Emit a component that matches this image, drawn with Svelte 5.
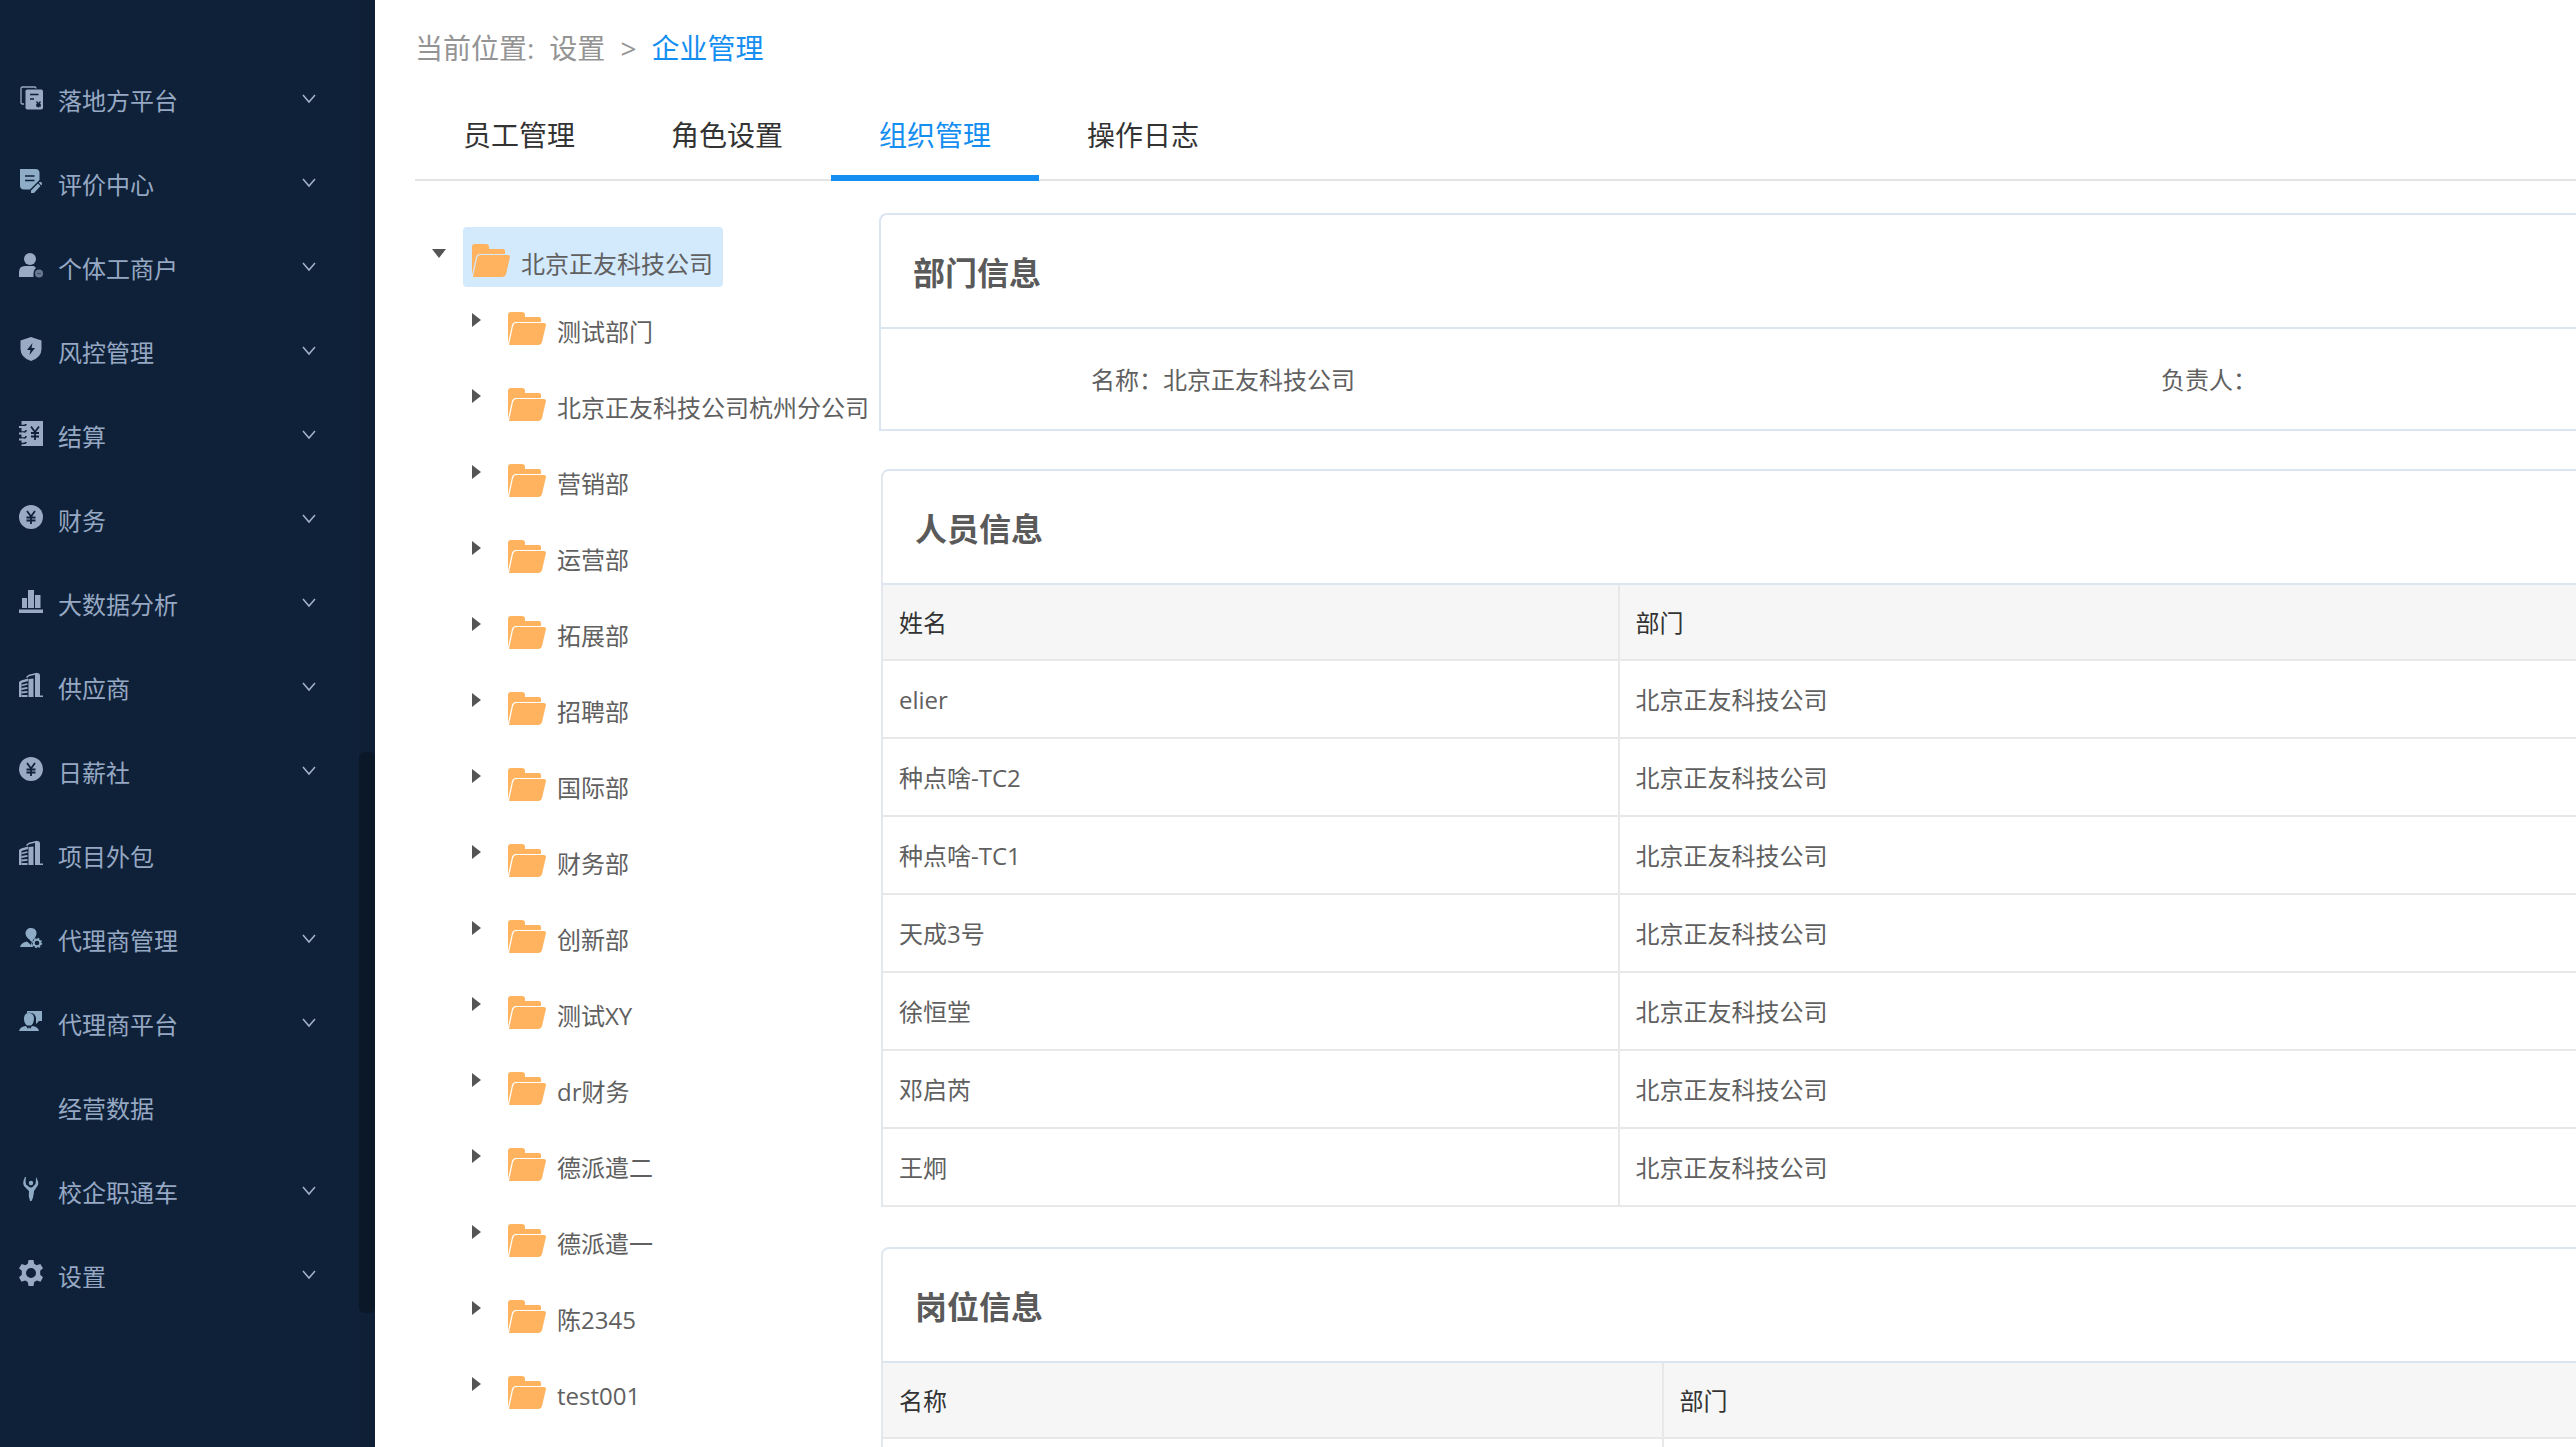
<script lang="ts">
    type MenuItem = { label: string; icon: string; arrow: boolean };

    const menu: MenuItem[] = [
        { label: '落地方平台', icon: 'bill', arrow: true },
        { label: '评价中心', icon: 'review', arrow: true },
        { label: '个体工商户', icon: 'person', arrow: true },
        { label: '风控管理', icon: 'shield', arrow: true },
        { label: '结算', icon: 'ledger', arrow: true },
        { label: '财务', icon: 'coin', arrow: true },
        { label: '大数据分析', icon: 'bars', arrow: true },
        { label: '供应商', icon: 'building', arrow: true },
        { label: '日薪社', icon: 'coin', arrow: true },
        { label: '项目外包', icon: 'building', arrow: false },
        { label: '代理商管理', icon: 'agent-gear', arrow: true },
        { label: '代理商平台', icon: 'agent-chat', arrow: true },
        { label: '经营数据', icon: '', arrow: false },
        { label: '校企职通车', icon: 'school', arrow: true },
        { label: '设置', icon: 'gear', arrow: true },
    ];

    const tabs = ['员工管理', '角色设置', '组织管理', '操作日志'];
    let activeTab = $state('组织管理');

    const company = '北京正友科技公司';
    const departments = [
        '测试部门',
        '北京正友科技公司杭州分公司',
        '营销部',
        '运营部',
        '拓展部',
        '招聘部',
        '国际部',
        '财务部',
        '创新部',
        '测试XY',
        'dr财务',
        '德派遣二',
        '德派遣一',
        '陈2345',
        'test001',
    ];
    let selected = $state(company);

    const people = ['elier', '种点啥-TC2', '种点啥-TC1', '天成3号', '徐恒堂', '邓启芮', '王炯'];
</script>

{#snippet folder()}
    <svg class="folder" viewBox="0 0 38 40" aria-hidden="true">
        <path d="M0 31V3Q0 0 3 0H14Q17 0 17 3V5H31Q33 5 33 7V10H8Q5 10 4 13Z" fill="#ffb35f" />
        <path d="M8 11H36Q38 11 38 13L34 30Q33 33 30 33H1L5 14Q6 11 8 11Z" fill="#ffb35f" />
    </svg>
{/snippet}

{#snippet menuIcon(name: string)}
    <svg class="menu-icon" class:cyan={['review', 'agent-gear', 'agent-chat', 'school'].includes(name)} viewBox="0 0 24 24" aria-hidden="true">
        {#if name === 'bill'}
            <path class="line" d="M5 19H3.5Q2 19 2 17.500V3.500Q2 2 3.500 2H15.500Q17 2 17 3.500" stroke-width="1.300" />
            <rect x="6.500" y="4.500" width="17.500" height="20" rx="1.800" />
            <path class="cut" d="M11 9.500H19.500M11 14H15M17.500 16.500L19.500 19L21.500 16.500M19.500 19V22.500M17.200 19.500H21.800M17.200 21H21.800" stroke-width="1.300" />
        {:else if name === 'review'}
            <path d="M1 0H16.500Q20.500 0 20.500 4V11L11 20.500H5Q1 20.500 1 16.500Z" />
            <path class="cut" d="M6 7H15.500M6 11.500H15.500" stroke-width="1.500" />
            <path d="M12 21.500L19 14.500L21.500 17L15 24H12ZM19.800 13.800L20.700 13Q21.500 12.500 22.500 13.500T23 15.500L22.200 16.300Z" />
        {:else if name === 'person'}
            <circle cx="11" cy="6" r="6" />
            <path d="M0 24V19Q0 13 6 13H15L17 15Q14 17 14.500 24Z" />
            <circle cx="20" cy="20.500" r="4" opacity="0.650" />
            <path class="cut" d="M18 20.500H22" stroke-width="1" opacity="0.500" />
        {:else if name === 'shield'}
            <path d="M12 0L22.500 3.500V12Q22.500 20.500 12 24Q1.500 20.500 1.500 12V3.500Z" />
            <path class="hole" d="M13.500 6L8 13H11.500L10.500 18L16 11H12.500Z" />
        {:else if name === 'ledger'}
            <path d="M2.500 0H24V25H2.500Z" />
            <path class="cut" d="M0 4.500H4Q7 4.500 7 3M0 11H5Q7 11 7 9M0 17H5Q7 17 7 15M0 22.500H4Q7 22.500 7 21" stroke-width="1.500" />
            <path class="line" d="M0 6H5M0 12.500H5M0 18.500H5" stroke-width="1.800" />
            <path class="cut" d="M12 5.500L16 11L20 5.500M16 11V19M12 12H20M12 15.500H20" stroke-width="1.800" />
        {:else if name === 'coin'}
            <circle cx="12" cy="12" r="12" />
            <path class="cut" d="M8 6L12 11.500L16 6M12 11.500V19M7.500 12.500H16.500M7.500 15.500H16.500" stroke-width="1.800" />
        {:else if name === 'bars'}
            <path d="M3 9H8V19H3ZM9 1H15V19H9ZM16 6H21.500V19H16ZM0 20.500H24V24H0Z" />
        {:else if name === 'building'}
            <path d="M0 9L2 7.500L9 5.500V8L2.500 10V24H0Z" />
            <path class="line" d="M2.500 12.500L8.500 11M2.500 16L8.500 14.800M2.500 19.500L8.500 18.800M2.500 23H8.500" stroke-width="1.800" />
            <path d="M9.500 6L14.500 5.500V24H9.500ZM16 1L18.500 0Q21 0 21 3V22.500H24V24H16Z" />
            <path class="line" d="M7.500 4.500L10 2.500L18 .500" stroke-width="1.500" />
        {:else if name === 'agent-gear'}
            <path d="M12 3C16 3 18 6 17.500 9C17 12 15 14 14 15L13 17L11.500 16L10.500 14.500C8.500 13.500 6.500 11 6.500 8.500C6.500 5 9 3 12 3Z" />
            <path d="M1 22Q2 17.500 8 16.500L12 20L12.500 17L14 22Z" />
            <circle class="line" cx="18" cy="18" r="3.300" stroke-width="2" />
            <circle class="line" cx="18" cy="18" r="4.600" stroke-width="1.200" stroke-dasharray="1.800 1.810" />
        {:else if name === 'agent-chat'}
            <path d="M8 2H23V12H20L17 15V9Q16 3 8 4Z" />
            <path d="M10 4Q15 4 15 10Q14.500 15 12 16.500H8Q5 14 5 10Q5 4 10 4ZM0 22Q1 17.500 7 17L9 20L10 18L11 20L13 17Q19 17.500 20 22Z" />
        {:else if name === 'school'}
            <circle cx="12" cy="6" r="2.200" />
            <path d="M6 0Q3 6 5 9L10 14Q9 19 11 24H12.500Q14.500 21 15 14L19 8Q20 5 17 0Q17 5 16.500 7L13 10.500H11L7 7.500Q6 5 7 0Z" />
        {:else if name === 'gear'}
            <path fill-rule="evenodd" d="M9.500 -1H14.500L15.200 2.800L17.600 4.200L21.300 3L24 7.200L21.200 9.700V13.800L24 16.300L21.500 20.800L17.800 19.600L15.200 21L14.500 25H9.500L8.800 21L6.200 19.600L2.500 20.800L0 16.300L2.800 13.800V9.700L0 7.200L2.700 3L6.400 4.200L8.800 2.800ZM12 7A5 5 0 1 0 12 17A5 5 0 1 0 12 7Z" />
        {/if}
    </svg>
{/snippet}

<div class="layout">
    <aside class="sidebar">
        <nav class="menu">
            {#each menu as item}
                <a class="menu-item" href="#menu">
                    <span class="icon-slot">
                        {#if item.icon}
                            {@render menuIcon(item.icon)}
                        {/if}
                    </span>
                    <span class="menu-label">{item.label}</span>
                    {#if item.arrow}
                        <svg class="chevron" viewBox="0 0 14 10" aria-hidden="true">
                            <path d="M1 1L7 8L13 1" />
                        </svg>
                    {/if}
                </a>
            {/each}
        </nav>
        <div class="track"><div class="thumb"></div></div>
    </aside>

    <main class="main">
        <div class="breadcrumb">
            <span>当前位置:</span>
            <a href="#settings">设置</a>
            <span>&gt;</span>
            <a class="current" href="#company">企业管理</a>
        </div>

        <div class="tabs" role="tablist">
            {#each tabs as tab}
                <button
                    class="tab"
                    class:active={tab === activeTab}
                    role="tab"
                    aria-selected={tab === activeTab}
                    onclick={() => (activeTab = tab)}>{tab}</button>
            {/each}
        </div>

        <div class="content">
            <div class="tree">
                <div class="node root">
                    <svg class="caret" viewBox="0 0 14 14" aria-hidden="true"><path d="M0 4H14L7 13Z" /></svg>
                    <button class="node-label" class:selected={selected === company} onclick={() => (selected = company)}>
                        {@render folder()}{company}
                    </button>
                </div>
                {#each departments as dept}
                    <div class="node child">
                        <svg class="caret" viewBox="0 0 14 14" aria-hidden="true"><path d="M1 0V14L10 7Z" /></svg>
                        <button class="node-label" class:selected={selected === dept} onclick={() => (selected = dept)}>
                            {@render folder()}{dept}
                        </button>
                    </div>
                {/each}
            </div>

            <div class="panels">
                <section class="panel">
                    <h2>部门信息</h2>
                    <dl class="info">
                        <dt>名称：</dt>
                        <dd>{company}</dd>
                        <dt>负责人：</dt>
                        <dd></dd>
                    </dl>
                </section>

                <section class="panel inset">
                    <h2>人员信息</h2>
                    <table class="people">
                        <thead>
                            <tr><th>姓名</th><th>部门</th></tr>
                        </thead>
                        <tbody>
                            {#each people as name}
                                <tr><td>{name}</td><td>{company}</td></tr>
                            {/each}
                        </tbody>
                    </table>
                </section>

                <section class="panel inset">
                    <h2>岗位信息</h2>
                    <table class="posts">
                        <thead>
                            <tr><th>名称</th><th>部门</th></tr>
                        </thead>
                        <tbody>
                            <tr><td></td><td></td></tr>
                        </tbody>
                    </table>
                </section>
            </div>
        </div>
    </main>
</div>

<style>
    :global(body) {
        background: #fff;
        overflow: hidden;
    }

    .layout {
        display: flex;
        height: 100vh;
        overflow: hidden;
        font-family: 'Open Sans', 'Noto Sans CJK SC', sans-serif;
        font-size: 24px;
        line-height: 36px;
        color: #606060;
    }

    button {
        border: 0;
        background: none;
        font: inherit;
        color: inherit;
        cursor: pointer;
    }

    a {
        color: inherit;
        text-decoration: none;
    }

    .sidebar {
        position: relative;
        flex: none;
        width: 375px;
        background: #0f2138;
        color: #96a8c3;
    }

    .menu {
        padding-top: 57px;
    }

    .menu-item {
        display: flex;
        align-items: center;
        height: 84px;
        padding: 0 59px 0 19px;
    }

    .icon-slot {
        width: 39px;
        height: 28px;
    }

    .menu-icon {
        display: block;
        width: 24px;
        height: 24px;
        overflow: visible;
        fill: #9aa9c4;
        stroke: none;
    }

    .menu-icon.cyan {
        fill: #8eacc6;
    }

    .menu-icon .line {
        fill: none;
        stroke: #9aa9c4;
    }

    .menu-icon.cyan .line {
        stroke: #8eacc6;
    }

    .menu-icon .cut {
        fill: none;
        stroke: #0f2138;
    }

    .menu-icon .hole {
        fill: #0f2138;
    }

    .menu-label {
        flex: 1;
        padding-top: 3px;
    }

    .chevron {
        width: 14px;
        height: 10px;
        fill: none;
        stroke: #a3b3ca;
        stroke-width: 1.5;
    }

    /* overlay scrollbar */
    .track {
        position: absolute;
        top: 0;
        right: 0;
        bottom: 0;
        width: 16px;
        background: #0e1f36;
    }

    .thumb {
        height: 561px;
        margin-top: 752px;
        border-radius: 6px;
        background: #0b1828;
    }

    .main {
        flex: 1;
        min-width: 0;
        padding-left: 40px;
    }

    .breadcrumb {
        display: flex;
        gap: 15px;
        padding-bottom: 2px;
        font-size: 28px;
        line-height: 96px;
        color: #949494;
    }

    .current {
        color: #148ef0;
    }

    .tabs {
        display: flex;
        border-bottom: 2px solid #e4e4e4;
    }

    .tab {
        margin-bottom: -2px;
        padding: 0 48px 2px;
        border-bottom: 6px solid transparent;
        font-size: 28px;
        line-height: 75px;
        color: #333;
    }

    .tab.active {
        border-color: #148ef0;
        color: #148ef0;
    }

    .content {
        display: flex;
        padding-top: 32px;
    }

    .tree {
        flex: none;
        width: 464px;
        padding-top: 14px;
    }

    .node {
        display: flex;
        height: 60px;
        margin-bottom: 16px;
        white-space: nowrap;
    }

    .root {
        margin-bottom: 8px;
        padding-left: 17px;
    }

    .child {
        padding-left: 56px;
    }

    .caret {
        flex: none;
        width: 14px;
        height: 14px;
        margin-top: 18px;
        fill: #555;
    }

    .node-label {
        display: flex;
        align-items: center;
        gap: 11px;
        margin-left: 17px;
        padding: 13px 10px 0 9px;
        border-radius: 4px;
    }

    .child .node-label {
        margin-left: 14px;
    }

    .node-label.selected {
        background: #d3e9fc;
    }

    .folder {
        flex: none;
        width: 38px;
        height: 40px;
    }

    .panels {
        flex: 1;
        min-width: 0;
    }

    .panel {
        border: 2px solid #dce6f1;
        border-right: 0;
        border-top-left-radius: 8px;
    }

    .panel.inset {
        margin: 38px 0 40px 2px;
        border-bottom: 0;
        border-left-color: #e2e8ee;
    }

    h2 {
        margin: 0;
        padding: 4px 32px 0;
        border-bottom: 2px solid #dce6f1;
        font-size: 32px;
        line-height: 108px;
        color: #5a5a5a;
    }

    .info {
        display: grid;
        grid-template-columns: 282px 28fr 282px 11fr;
        margin: 0;
        padding-top: 2px;
        line-height: 98px;
    }

    .info dt {
        text-align: right;
    }

    .info dd {
        margin: 0;
    }

    table {
        width: 100%;
        border-collapse: separate;
        border-spacing: 0;
        table-layout: fixed;
    }

    th,
    td {
        height: 74px;
        padding: 2px 16px 0;
        border-bottom: 2px solid #e8e8e8;
        text-align: left;
    }

    th {
        height: 73px;
        padding-top: 1px;
        background: #f6f6f6;
        font-weight: 400;
        color: #333;
    }

    th:first-child,
    td:first-child {
        border-right: 2px solid #e8e8e8;
    }

    .people th:first-child {
        width: 41.5%;
    }

    .posts th:first-child {
        width: 44.1%;
    }
</style>
